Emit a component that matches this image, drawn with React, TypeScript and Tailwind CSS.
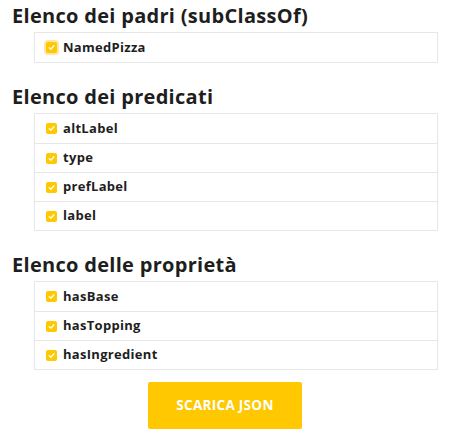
const sections = [
  { title: "Elenco dei padri (subClassOf)", items: ["NamedPizza"] },
  { title: "Elenco dei predicati", items: ["altLabel", "type", "prefLabel", "label"] },
  { title: "Elenco delle proprietà", items: ["hasBase", "hasTopping", "hasIngredient"] },
];

function CheckBox({ focused }: { focused?: boolean }) {
  return (
    <span
      className={`flex items-center justify-center w-[11px] h-[11px] rounded-[2px] bg-[#ffc800] shrink-0 ${
        focused ? "ring-[2px] ring-[#ffe7a0]" : ""
      }`}
    >
      <svg width="7" height="7" viewBox="0 0 8 8" fill="none">
        <path d="M1.3 4.2 3.2 6 6.8 2" stroke="#fff" strokeWidth="1.4" strokeLinecap="round" strokeLinejoin="round" />
      </svg>
    </span>
  );
}

export default function App() {
  return (
    <div className="w-[454px] h-[437px] bg-white text-[#1e1e1e] font-['Open_Sans',sans-serif] pt-[4px]">
      {sections.map((s, si) => (
        <section key={s.title} className={si > 0 ? "mt-[22px]" : ""}>
          <h2 className="pl-[12px] text-[20px] leading-[24px] font-bold tracking-[0.3px]">{s.title}</h2>
          <ul className="ml-[34px] mt-[4px] w-[404px] border border-[#e6e6e6]">
            {s.items.map((it, i) => (
              <li
                key={it}
                className={`flex items-center gap-[6px] h-[29px] pl-[11px] text-[13px] font-bold tracking-[0.3px] ${
                  i > 0 ? "border-t border-[#e6e6e6]" : ""
                }`}
              >
                <CheckBox focused={si === 0} />
                <span>{it}</span>
              </li>
            ))}
          </ul>
        </section>
      ))}
      <button className="ml-[148px] mt-[12px] w-[154px] h-[47px] rounded-[2px] bg-[#ffc800] text-white text-[13.5px] font-bold tracking-[0.3px]">
        SCARICA JSON
      </button>
    </div>
  );
}
